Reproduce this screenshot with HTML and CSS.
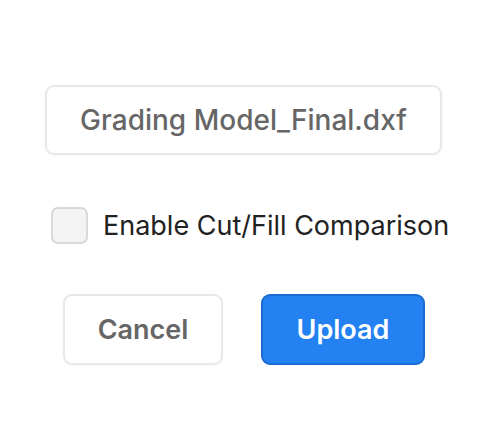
FILE: index.html
```html
<!DOCTYPE html>
<html>
<head>
<meta charset="utf-8">
<link rel="stylesheet" href="styles.css">
</head>
<body>
<div class="dialog">
  <div class="file">Grading Model_Final.dxf</div>
  <label class="option">
    <span class="check"></span>
    <span class="option-text">Enable Cut/Fill Comparison</span>
  </label>
  <div class="actions">
    <button class="btn cancel">Cancel</button>
    <button class="btn upload">Upload</button>
  </div>
</div>
</body>
</html>
```

FILE: styles.css
```css
* { box-sizing: border-box; }
html, body { margin: 0; background: #fff; }
body { font-family: Inter, "Noto Sans", sans-serif; width: 494px; height: 440px; }
.dialog {
  display: flex;
  flex-direction: column;
  align-items: flex-start;
  padding: 85px 0 0 45px;
}
.file {
  width: 397px;
  height: 70px;
  border: 2px solid #e8e8e8;
  border-radius: 9px;
  display: flex;
  align-items: center;
  justify-content: center;
  font-size: 28px;
  font-weight: 500;
  color: #666;
  box-shadow: 0 1px 3px rgba(0,0,0,0.04);
}
.option {
  display: flex;
  align-items: center;
  margin: 52px 0 0 6px;
  gap: 15px;
}
.check {
  width: 37px;
  height: 37px;
  border: 2px solid #d9d9d9;
  border-radius: 7px;
  background: #f3f3f3;
}
.option-text {
  font-size: 27px;
  color: #222;
}
.actions {
  display: flex;
  gap: 38px;
  margin: 50px 0 0 18px;
}
.btn {
  height: 71px;
  border-radius: 9px;
  font-family: Inter, "Noto Sans", sans-serif;
  font-size: 27px;
  font-weight: 600;
  cursor: pointer;
}
.cancel {
  width: 160px;
  background: #fff;
  border: 2px solid #e8e8e8;
  color: #666;
  box-shadow: 0 1px 3px rgba(0,0,0,0.04);
}
.upload {
  width: 164px;
  background: #2381f1;
  border: 2px solid #1a6cd2;
  color: #fff;
}
```
